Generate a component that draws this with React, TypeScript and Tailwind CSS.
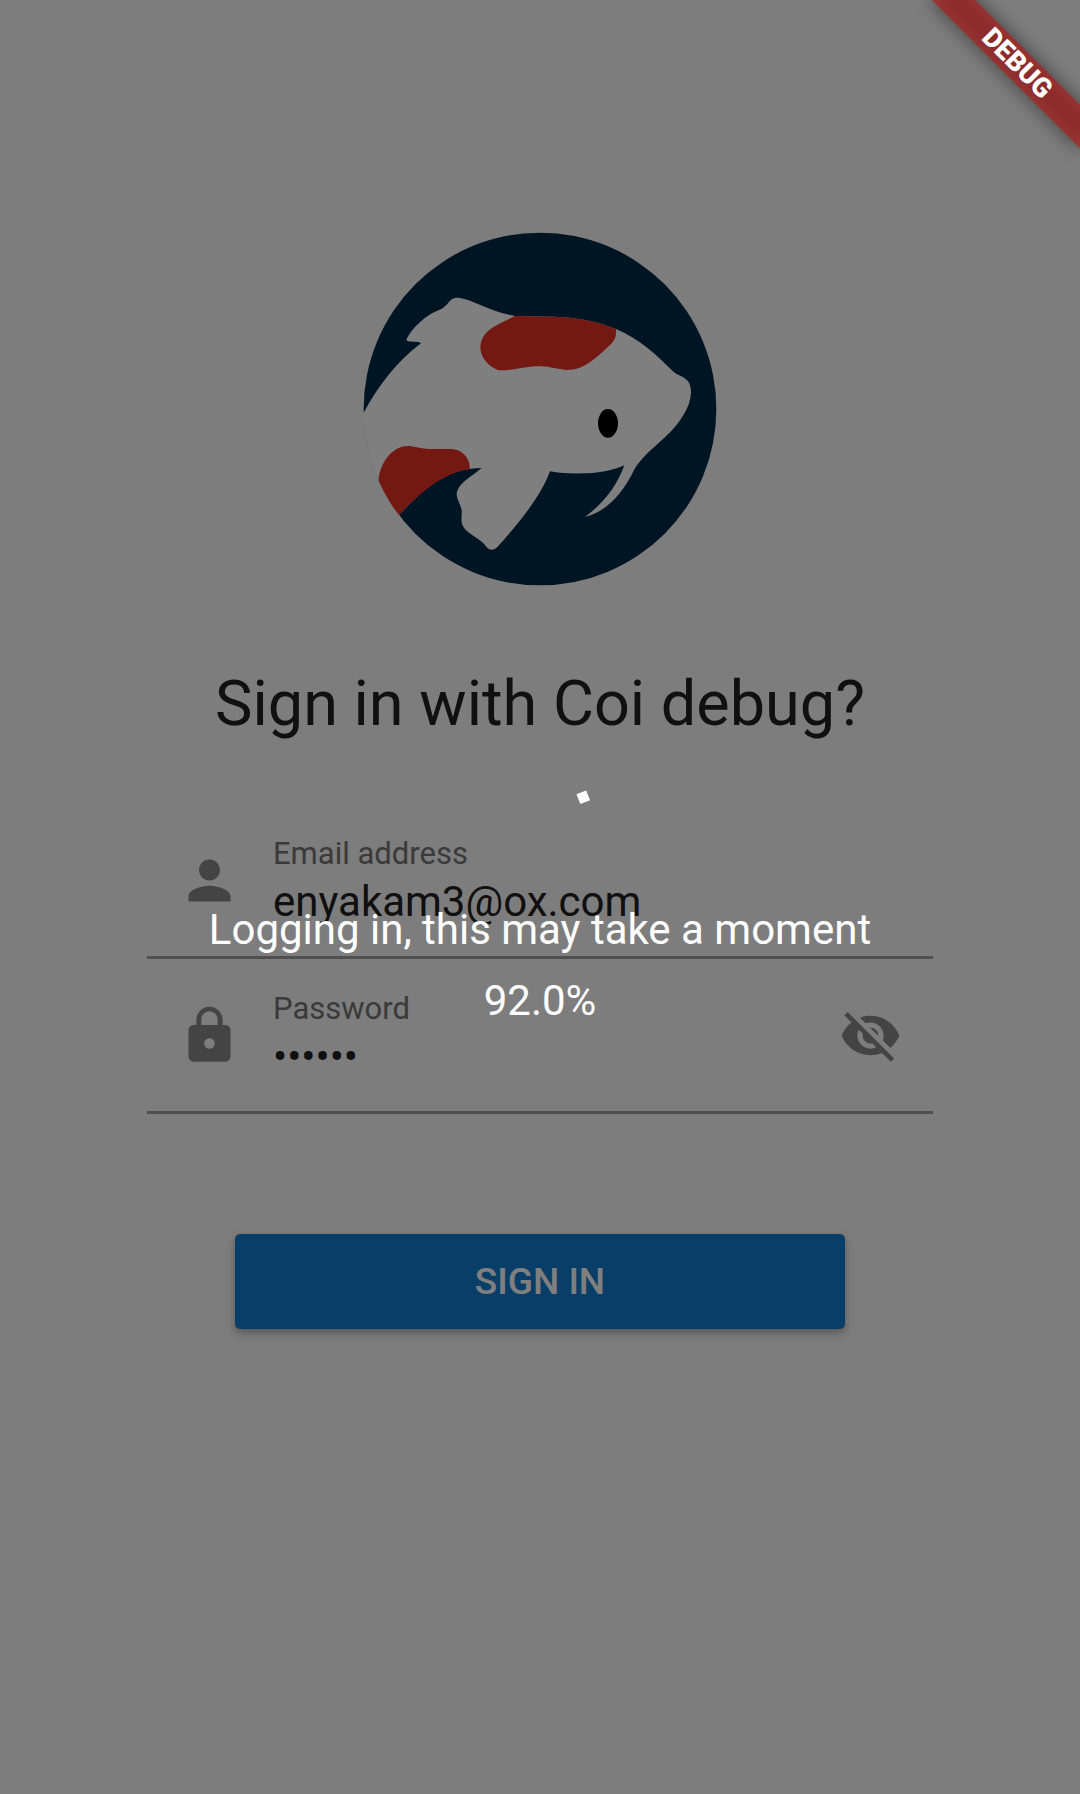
import React, { useState } from "react";
import { MdLock, MdPerson, MdVisibility, MdVisibilityOff } from "react-icons/md";

function KoiLogo() {
  return (
    <svg viewBox="69 66 1062 1062" className="size-[354px]" role="img" aria-label="Coi">
      <defs>
        <clipPath id="disc">
          <circle cx="600" cy="597" r="530" />
        </clipPath>
      </defs>
      <circle cx="600" cy="597" r="529" fill="#002b49" />
      <g clipPath="url(#disc)">
        <path
          fill="#ffffff"
          d="M68 614 C112 530 170 455 243 400 C238 392 205 399 199 390 C203 376 240 324 290 303 C335 286 320 263 356 263 C395 267 450 305 525 318 L640 320 C720 322 780 338 828 357 C900 388 945 430 1002 487 C1020 502 1054 500 1053 548 C1052 590 1020 640 975 682 C935 718 905 742 882 780 C850 850 795 908 735 921 C790 880 830 830 853 766 C820 780 780 789 740 790 C700 791 660 790 630 784 C606 850 550 925 475 1008 C465 1020 450 1024 440 1012 C425 990 405 983 385 967 C350 937 372 915 363 893 C358 875 345 860 352 842 C362 815 395 800 425 774 C330 775 270 815 176 916 L100 1000 L0 900 L0 614 Z"
        />
        <path
          fill="#e63224"
          d="M525 318 L640 320 C720 322 780 338 828 357 C830 385 822 395 800 415 C745 465 720 480 680 480 C650 478 635 470 600 469 C550 469 525 482 475 481 C440 465 421 440 421 410 C425 360 470 345 525 318 Z"
        />
        <path
          fill="#e63224"
          d="M116 805 C125 745 165 705 210 708 C245 714 255 718 280 717 L335 717 C365 718 392 745 389 776 C320 790 260 825 178 914 L100 940 Z"
        />
      </g>
      <ellipse cx="804" cy="640" rx="30" ry="43" fill="#000000" />
    </svg>
  );
}

function Field({
  id,
  label,
  type,
  defaultValue,
  icon,
  action,
}: {
  id: string;
  label: string;
  type: string;
  defaultValue: string;
  icon: React.ReactNode;
  action?: React.ReactNode;
}) {
  return (
    <div className="flex h-[155px] w-full items-center gap-8 border-b-[3px] border-[#9e9e9e] px-[31px]">
      <span className="shrink-0 text-[#888888]">{icon}</span>
      <div className="flex min-w-0 flex-1 flex-col gap-[3px]">
        <label htmlFor={id} className="text-[31px] leading-10 text-[#757575]">
          {label}
        </label>
        <input
          id={id}
          type={type}
          defaultValue={defaultValue}
          className="h-[50px] w-full bg-transparent p-0 text-[42px] leading-[50px] text-[#202020] outline-none"
        />
      </div>
      {action}
    </div>
  );
}

function LoadingOverlay() {
  return (
    <div
      role="status"
      className="absolute inset-0 flex flex-col items-center justify-center bg-black/50 pb-px text-[42px] leading-[49px] text-white"
    >
      <svg viewBox="0 0 94 94" className="mb-[43px] size-[94px] overflow-visible" aria-hidden="true">
        <rect x="88.5" y="41.5" width="10.5" height="10.5" fill="currentColor" transform="rotate(-22 47 47)" />
      </svg>
      <p className="mb-[22px]">Logging in, this may take a moment</p>
      <p>92.0%</p>
    </div>
  );
}

function DebugBanner() {
  return (
    <div className="absolute top-0 right-0 flex size-[126px] items-center justify-center">
      <div className="relative flex h-[31px] w-[210px] shrink-0 rotate-45 items-center justify-center">
        <div className="absolute inset-0 bg-black/50 blur-[10px]" />
        <div className="absolute inset-0 bg-[#b71c1c]/63" />
        <span className="relative text-[27px] leading-[31px] font-black text-white">DEBUG</span>
      </div>
    </div>
  );
}

export default function App() {
  const [hidden, setHidden] = useState(true);
  return (
    <main className="relative min-h-screen overflow-hidden bg-[#fafafa] font-[Roboto,sans-serif]">
      <form
        className="flex flex-col items-center px-[147px] pt-[232px]"
        onSubmit={(e) => e.preventDefault()}
      >
        <KoiLogo />
        <h1 className="mt-[81px] text-[63px] leading-[74px] whitespace-nowrap text-[#202020]">
          Sign in with Coi debug?
        </h1>
        <div className="mt-[63px] w-full">
          <Field
            id="email"
            label="Email address"
            type="email"
            defaultValue="enyakam3@ox.com"
            icon={<MdPerson size={63} />}
          />
          <Field
            id="password"
            label="Password"
            type={hidden ? "password" : "text"}
            defaultValue="secret"
            icon={<MdLock size={63} />}
            action={
              <button
                type="button"
                aria-label="Toggle password visibility"
                className="shrink-0 text-[#888888]"
                onClick={() => setHidden(!hidden)}
              >
                {hidden ? <MdVisibilityOff size={63} /> : <MdVisibility size={63} />}
              </button>
            }
          />
        </div>
        <div className="mt-[120px] w-full px-[88px]">
          <button
            type="submit"
            className="h-[95px] w-full rounded-[5px] bg-[#107cd0] text-[37px] font-medium text-white shadow-[0_4px_8px_rgba(0,0,0,0.3)]"
          >
            SIGN IN
          </button>
        </div>
      </form>
      <LoadingOverlay />
      <DebugBanner />
    </main>
  );
}
